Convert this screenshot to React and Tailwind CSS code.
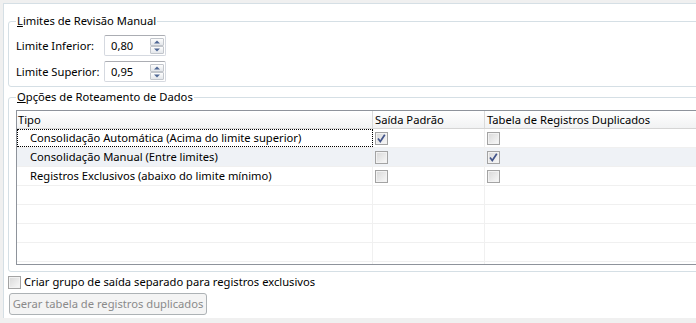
import React from "react";

const rows = [
  { label: "Consolidação Automática (Acima do limite superior)", saida: true, tabela: false, focus: true },
  { label: "Consolidação Manual (Entre limites)", saida: false, tabela: true, hover: true },
  { label: "Registros Exclusivos (abaixo do limite mínimo)", saida: false, tabela: false },
];

function CheckBox({ checked }) {
  return (
    <span className="flex items-center justify-center w-[13px] h-[13px] border border-[#a3a3a3] bg-linear-to-br from-[#d8d8d8] to-[#f9f9f9] shadow-[inset_0_0_0_1px_#f2f2f2]">
      {checked && (
        <svg width="11" height="11" viewBox="0 0 11 11">
          <polyline points="2,5.5 4.3,8.5 8.8,1.8" fill="none" stroke="#42548a" strokeWidth="1.7" />
        </svg>
      )}
    </span>
  );
}

function SpinButton({ up }) {
  return (
    <span className="flex items-center justify-center h-[8px] w-[14px] border border-[#c2c6cc] rounded-[1px] bg-linear-to-b from-[#fdfdfd] to-[#e4e7eb]">
      <svg width="6" height="4" viewBox="0 0 6 4">
        {up ? <polygon points="0,3.5 6,3.5 3,0.5" fill="#4f6794" /> : <polygon points="0,0.5 6,0.5 3,3.5" fill="#4f6794" />}
      </svg>
    </span>
  );
}

function Spinner({ value }) {
  return (
    <div className="flex items-center w-[62px] h-[21px] border border-[#d5d9e0] border-t-[#abadb3] rounded-[2px] bg-white pl-[6px] pr-[1px]">
      <span className="flex-1">{value}</span>
      <div className="flex flex-col">
        <SpinButton up />
        <SpinButton />
      </div>
    </div>
  );
}

export default function App() {
  return (
    <div className="w-[696px] h-[323px] overflow-hidden bg-[#f0f0f0] pt-[3px] pl-[3px] text-[11.2px] leading-[16px] text-black whitespace-nowrap font-['Noto_Sans','Liberation_Sans',sans-serif]">
      <div className="h-[315px] bg-white border-t border-l border-[#d5dfe5] overflow-hidden">
        {/* Limites de Revisão Manual */}
        <fieldset className="ml-[4px] mt-[9px] w-[720px] border border-[#d5dfe5] rounded-[3px] pl-[7px] pt-[6px] pb-[4px]">
          <legend className="px-[1px]">
            <span className="underline">L</span>imites de Revisão Manual
          </legend>
          <div className="flex flex-col gap-[5px]">
            <div className="flex items-center">
              <span className="w-[88px]">Limite Inferior:</span>
              <Spinner value="0,80" />
            </div>
            <div className="flex items-center">
              <span className="w-[88px]">Limite Superior:</span>
              <Spinner value="0,95" />
            </div>
          </div>
        </fieldset>

        {/* Opções de Roteamento de Dados */}
        <fieldset className="ml-[4px] mt-[2px] w-[720px] border border-[#d5dfe5] rounded-[3px] pl-[7px] pt-[5px] pb-[6px]">
          <legend className="px-[1px]">
            <span className="underline">O</span>pções de Roteamento de Dados
          </legend>
          <div className="w-[700px] h-[155px] border border-[#8e939b] overflow-hidden bg-white">
            <div className="grid grid-cols-[356px_112px_1fr] h-[18px] border-b border-[#d5d5d5] bg-linear-to-b from-white to-[#f1f2f3]">
              <div className="pl-[1px] border-r border-[#dadada] flex items-center">Tipo</div>
              <div className="pl-[2px] border-r border-[#dadada] flex items-center">Saída Padrão</div>
              <div className="pl-[2px] flex items-center">Tabela de Registros Duplicados</div>
            </div>
            {rows.map((r) => (
              <div key={r.label} className={`grid grid-cols-[356px_112px_1fr] h-[19px] border-b border-[#f0f0f0] ${r.hover ? "bg-[#eff2f6]" : ""}`}>
                <div className={`pl-[13px] border-r border-[#f0f0f0] flex items-center ${r.focus ? "outline outline-dotted outline-black -outline-offset-1" : ""}`}>
                  {r.label}
                </div>
                <div className="pl-[2px] border-r border-[#f0f0f0] flex items-center">
                  <CheckBox checked={r.saida} />
                </div>
                <div className="pl-[2px] flex items-center">
                  <CheckBox checked={r.tabela} />
                </div>
              </div>
            ))}
            {[0, 1, 2, 3, 4].map((i) => (
              <div key={i} className="grid grid-cols-[356px_112px_1fr] h-[19px] border-b border-[#f0f0f0]">
                <div className="border-r border-[#f0f0f0]" />
                <div className="border-r border-[#f0f0f0]" />
                <div />
              </div>
            ))}
          </div>
        </fieldset>

        <div className="ml-[4px] mt-[2px] flex items-center gap-[3px] h-[16px]">
          <CheckBox />
          <span>Criar grupo de saída separado para registros exclusivos</span>
        </div>

        <button className="ml-[5px] mt-[3px] w-[198px] h-[22px] border border-[#adb2b5] rounded-[3px] bg-[#f4f4f4] text-[#8a8a8a] text-center">
          Gerar tabela de registros duplicados
        </button>
      </div>
    </div>
  );
}
